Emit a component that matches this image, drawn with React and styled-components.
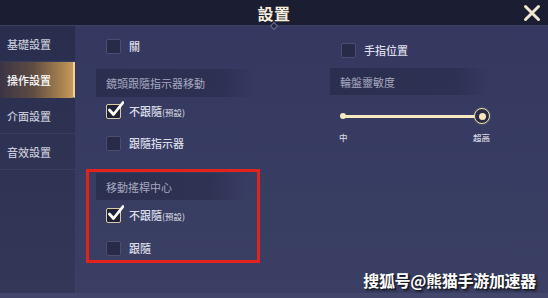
import React from 'react';
import styled, { createGlobalStyle } from 'styled-components';

const GlobalStyle = createGlobalStyle`
  html, body {
    margin: 0;
    padding: 0;
    background: #1b1d33;
  }
  body {
    font-family: "Noto Sans CJK TC", "Noto Sans", sans-serif;
  }
`;

const Screen = styled.div`
  position: relative;
  width: 548px;
  height: 298px;
  overflow: hidden;
  display: flex;
  flex-direction: column;
  background: linear-gradient(180deg, #343860 0%, #3a3f63 100%);
`;

const Header = styled.header`
  position: relative;
  flex: none;
  height: 26px;
  box-sizing: border-box;
  display: grid;
  grid-template-columns: 1fr auto 1fr;
  align-items: center;
  background: #1b1d33;
  border-bottom: 1px solid #3c4063;
`;

const Title = styled.h1`
  grid-column: 2;
  margin: 0;
  font-size: 16px;
  font-weight: 700;
  line-height: 26px;
  color: #f4eedb;
  letter-spacing: 0.5px;
`;

/* small ornament hanging under the title */
const Diamond = styled.span`
  position: absolute;
  left: 271px;
  top: 23px;
  width: 4px;
  height: 4px;
  transform: rotate(45deg);
  border: 1px solid #6b7096;
  background: #23263f;
`;

const CloseButton = styled.button`
  grid-column: 3;
  justify-self: end;
  margin-right: 6px;
  width: 20px;
  height: 20px;
  padding: 0;
  border: 0;
  background: none;
  display: flex;
  align-items: center;
  justify-content: center;
  cursor: pointer;
`;

const Body = styled.div`
  flex: 1;
  display: grid;
  grid-template-columns: 76px 1fr;
`;

const Sidebar = styled.nav`
  display: flex;
  flex-direction: column;
  background: linear-gradient(180deg, #2a2e4e 0%, #333859 100%);
  border-right: 1px solid rgba(255, 255, 255, 0.05);
`;

const NavItem = styled.div`
  height: 36px;
  box-sizing: border-box;
  display: flex;
  align-items: center;
  padding-left: 7px;
  font-size: 11px;
  font-weight: 500;
  color: ${(p) => (p.$active ? '#ffffff' : '#c5c7d6')};
  border-bottom: 1px solid
    ${(p) => (p.$active ? 'transparent' : 'rgba(255, 255, 255, 0.06)')};
  background: ${(p) =>
    p.$active
      ? 'linear-gradient(90deg, #3a3444 0%, #5e4c42 45%, #a8834f 85%, #c49b5c 100%)'
      : 'transparent'};
  border-right: ${(p) => (p.$active ? '2px solid #f2d393' : '0')};
`;

const Content = styled.main`
  display: flex;
  padding-left: 20px;
`;

const LeftColumn = styled.section`
  width: 164px;
  display: flex;
  flex-direction: column;
`;

const RightColumn = styled.section`
  width: 162px;
  margin-left: 70px;
  display: flex;
  flex-direction: column;
`;

const SectionBar = styled.div`
  height: ${(p) => p.$h}px;
  width: ${(p) => p.$w}px;
  margin-top: ${(p) => p.$mt || 0}px;
  box-sizing: border-box;
  display: flex;
  align-items: center;
  padding-left: 10px;
  font-size: 11px;
  color: #a6a8bf;
  background: linear-gradient(
    90deg,
    rgba(20, 22, 42, 0.32) 0%,
    rgba(20, 22, 42, 0.26) 78%,
    rgba(20, 22, 42, 0) 100%
  );
`;

const Row = styled.div`
  height: ${(p) => p.$h}px;
  box-sizing: border-box;
  padding-top: ${(p) => p.$pt || 0}px;
  padding-left: ${(p) => (p.$pl === undefined ? 10 : p.$pl)}px;
  display: flex;
  align-items: center;
  gap: 8px;
`;

const Box = styled.span`
  position: relative;
  flex: none;
  width: 15px;
  height: 15px;
  box-sizing: border-box;
  border-radius: 2px;
  border: ${(p) => (p.$checked ? '1.5px solid #dccb9f' : '1px solid #4a4f72')};
  background: ${(p) => (p.$checked ? '#1e2137' : '#272b48')};
`;

const Tick = styled.svg`
  position: absolute;
  left: 0px;
  top: -4px;
  width: 17px;
  height: 17px;
`;

const Label = styled.span`
  font-size: 11px;
  font-weight: 500;
  color: #dcdde8;
  line-height: 1;
`;

const Hint = styled.span`
  font-size: 8.5px;
  font-weight: 500;
  color: #c6c8d6;
`;

const Highlight = styled.div`
  margin-top: 8px;
  margin-left: -10px;
  width: 174px;
  height: 94px;
  box-sizing: border-box;
  border: 3px solid #e2231d;
  padding: 1px 0 0 7px;
  display: flex;
  flex-direction: column;
`;

const Slider = styled.div`
  margin-top: 13px;
  margin-left: 10px;
  width: 150px;
  height: 16px;
  display: flex;
  align-items: center;
`;

const TrackEnd = styled.span`
  flex: none;
  width: 6px;
  height: 6px;
  border-radius: 50%;
  background: #f6e8c0;
`;

const Track = styled.span`
  flex: 1;
  height: 3px;
  margin: 0 -2px;
  background: #f6e8c0;
`;

const Knob = styled.span`
  flex: none;
  width: 16px;
  height: 16px;
  box-sizing: border-box;
  border-radius: 50%;
  border: 1.5px solid #efdcae;
  background: #2b2d45;
  display: flex;
  align-items: center;
  justify-content: center;
  box-shadow: 0 0 2px rgba(240, 220, 170, 0.4);

  &::after {
    content: '';
    width: 7px;
    height: 7px;
    border-radius: 50%;
    background: #f6e6b8;
  }
`;

const ScaleLabels = styled.div`
  margin-top: 7px;
  margin-left: 9px;
  width: 151px;
  height: 12px;
  display: flex;
  justify-content: space-between;
  align-items: center;
  font-size: 8.5px;
  font-weight: 500;
  color: #d6d7e2;
`;

const Footer = styled.div`
  flex: none;
  height: 5px;
  background: #41466a;
`;

const Watermark = styled.div`
  position: absolute;
  right: 12px;
  bottom: 6px;
  font-family: "Noto Sans CJK SC", "Noto Sans", sans-serif;
  font-size: 16px;
  font-weight: 700;
  color: #ffffff;
  letter-spacing: -0.3px;
  text-shadow: 1px 1px 0 #1a1a22, 2px 2px 2px rgba(0, 0, 0, 0.55);
`;

const menu = ['基礎設置', '操作設置', '介面設置', '音效設置'];

const Checkbox = ({ checked }) => (
  <Box $checked={checked}>
    {checked && (
      <Tick viewBox="0 0 17 17">
        <path
          d="M2.5 9 L6.5 13.5 L16 1.5"
          fill="none"
          stroke="#ffffff"
          strokeWidth="2.8"
          strokeLinecap="round"
          strokeLinejoin="round"
        />
      </Tick>
    )}
  </Box>
);

const Option = ({ checked, children, hint, ...rest }) => (
  <Row {...rest}>
    <Checkbox checked={checked} />
    <Label>
      {children}
      {hint && <Hint>{hint}</Hint>}
    </Label>
  </Row>
);

export default function App() {
  return (
    <>
      <GlobalStyle />
      <Screen>
        <Header>
          <Title>設置</Title>
          <Diamond />
          <CloseButton aria-label="close">
            <svg width="18" height="18" viewBox="0 0 18 18">
              <path
                d="M2.5 2.5 L15.5 15.5 M15.5 2.5 L2.5 15.5"
                stroke="#efe7cf"
                strokeWidth="3"
                strokeLinecap="round"
              />
            </svg>
          </CloseButton>
        </Header>
        <Body>
          <Sidebar>
            {menu.map((m, i) => (
              <NavItem key={m} $active={i === 1}>
                {m}
              </NavItem>
            ))}
          </Sidebar>
          <Content>
            <LeftColumn>
              <Option $h={41}>關</Option>
              <SectionBar $h={28} $w={160} $mt={2}>
                鏡頭跟隨指示器移動
              </SectionBar>
              <Option $h={28} checked hint="(預設)">
                不跟隨
              </Option>
              <Option $h={36}>跟隨指示器</Option>
              <Highlight>
                <SectionBar $h={27} $w={148}>
                  移動搖桿中心
                </SectionBar>
                <Option $h={30} checked hint="(預設)">
                  不跟隨
                </Option>
                <Option $h={30} $pt={6}>
                  跟隨
                </Option>
              </Highlight>
            </LeftColumn>
            <RightColumn>
              <Option $h={42} $pt={6} $pl={11}>
                手指位置
              </Option>
              <SectionBar $h={27} $w={160}>
                輪盤靈敏度
              </SectionBar>
              <Slider>
                <TrackEnd />
                <Track />
                <Knob />
              </Slider>
              <ScaleLabels>
                <span>中</span>
                <span>超高</span>
              </ScaleLabels>
            </RightColumn>
          </Content>
        </Body>
        <Footer />
        <Watermark>搜狐号@熊猫手游加速器</Watermark>
      </Screen>
    </>
  );
}
